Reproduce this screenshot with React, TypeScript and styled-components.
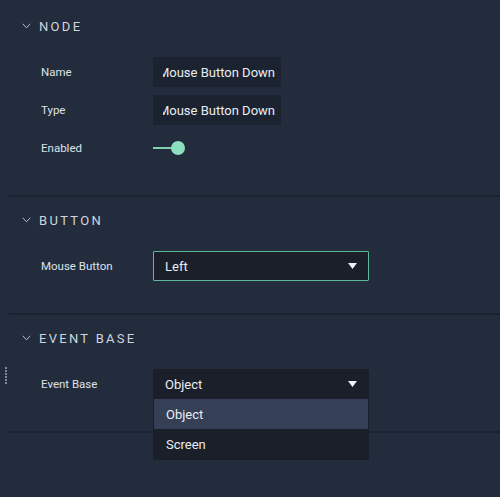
import React from "react";
import styled, { createGlobalStyle } from "styled-components";

const Global = createGlobalStyle`
  html, body { margin: 0; padding: 0; background: #222c3c; }
  body { font-family: Roboto, "Liberation Sans", sans-serif; }
  * { box-sizing: border-box; }
`;

const Panel = styled.div`
  position: relative;
  width: 500px;
  height: 497px;
  background: #222c3c;
  padding-top: 3px;
  overflow: hidden;
`;

const Section = styled.section`
  margin-left: 9px;
  padding: 13px 0 32px;
  border-bottom: 2px solid #1b2330;
`;

const Header = styled.div`
  display: flex;
  align-items: center;
  height: 20px;
  padding-left: 13px;
  gap: 8px;
`;

const Title = styled.span`
  font-size: 13px;
  letter-spacing: 2.3px;
  color: #d0d6df;
  text-transform: uppercase;
`;

const Rows = styled.div`
  display: flex;
  flex-direction: column;
  gap: 8px;
  margin-top: 21px;
`;

const Row = styled.div`
  display: flex;
  align-items: center;
  height: 30px;
  padding-left: 32px;
`;

const Label = styled.div`
  width: 112px;
  font-size: 11.5px;
  color: #dde2ea;
`;

const TextBox = styled.div`
  width: 128px;
  height: 30px;
  background: #1c2330;
  padding: 0 6px 0 10px;
  display: flex;
  align-items: center;
`;

const Clip = styled.div`
  flex: 1;
  overflow: hidden;
  display: flex;
  justify-content: flex-end;
  white-space: nowrap;
  font-size: 13px;
  color: #e9edf3;
`;

const Toggle = styled.div`
  width: 33px;
  height: 14px;
  display: flex;
  align-items: center;
`;

const Track = styled.div`
  width: 22px;
  height: 2px;
  background: #7fd2ae;
`;

const Knob = styled.div`
  width: 14px;
  height: 14px;
  border-radius: 50%;
  background: #8ddfbf;
  margin-left: -4px;
`;

const SelectWrap = styled.div`
  position: relative;
  width: 216px;
`;

const SelectBox = styled.div<{ $focused?: boolean; $open?: boolean }>`
  width: 216px;
  height: 30px;
  background: #1a1f29;
  border: 1px solid ${(p) => (p.$focused ? "#5cb995" : "#1a1f29")};
  border-radius: ${(p) => (p.$open ? "2px 2px 0 0" : "1px")};
  display: flex;
  align-items: center;
  justify-content: space-between;
  padding: 0 11px 0 11px;
  font-size: 13px;
  color: #e9edf3;
`;

const Menu = styled.div`
  position: absolute;
  left: 0;
  top: 30px;
  width: 216px;
  background: #1a1f29;
  border: 1px solid #1a1f29;
  border-top: none;
  border-radius: 0 0 2px 2px;
  z-index: 2;
`;

const Option = styled.div<{ $active?: boolean }>`
  height: 30px;
  display: flex;
  align-items: center;
  padding-left: 12px;
  font-size: 13px;
  color: #e9edf3;
  background: ${(p) => (p.$active ? "#353f55" : "transparent")};
`;

const Handle = styled.div`
  position: absolute;
  left: 5px;
  top: 367px;
  width: 2px;
  height: 17px;
  background: repeating-linear-gradient(
    to bottom,
    #7e899b 0px,
    #7e899b 2px,
    transparent 2px,
    transparent 3px
  );
`;

const Chevron = () => (
  <svg width="9" height="6" viewBox="0 0 9 6">
    <path d="M0.8 0.8 L4.5 4.8 L8.2 0.8" fill="none" stroke="#b7bfcb" strokeWidth="1" />
  </svg>
);

const Arrow = () => (
  <svg width="9" height="6" viewBox="0 0 9 6">
    <path d="M0 0 H9 L4.5 6 Z" fill="#eef1f5" />
  </svg>
);

const Select = ({ value, focused, options, active }: { value: string; focused?: boolean; options?: string[]; active?: string }) => (
  <SelectWrap>
    <SelectBox $focused={focused} $open={!!options}>
      <span>{value}</span>
      <Arrow />
    </SelectBox>
    {options && (
      <Menu>
        {options.map((o) => (
          <Option key={o} $active={o === active}>{o}</Option>
        ))}
      </Menu>
    )}
  </SelectWrap>
);

export default function App() {
  return (
    <>
      <Global />
      <Panel>
        <Section>
          <Header>
            <Chevron />
            <Title>Node</Title>
          </Header>
          <Rows>
            <Row>
              <Label>Name</Label>
              <TextBox><Clip>Mouse Button Down</Clip></TextBox>
            </Row>
            <Row>
              <Label>Type</Label>
              <TextBox><Clip>Mouse Button Down</Clip></TextBox>
            </Row>
            <Row>
              <Label>Enabled</Label>
              <Toggle>
                <Track />
                <Knob />
              </Toggle>
            </Row>
          </Rows>
        </Section>
        <Section>
          <Header>
            <Chevron />
            <Title>Button</Title>
          </Header>
          <Rows>
            <Row>
              <Label>Mouse Button</Label>
              <Select value="Left" focused />
            </Row>
          </Rows>
        </Section>
        <Section>
          <Header>
            <Chevron />
            <Title>Event Base</Title>
          </Header>
          <Rows>
            <Row>
              <Label>Event Base</Label>
              <Select value="Object" options={["Object", "Screen"]} active="Object" />
            </Row>
          </Rows>
        </Section>
        <Handle />
      </Panel>
    </>
  );
}
